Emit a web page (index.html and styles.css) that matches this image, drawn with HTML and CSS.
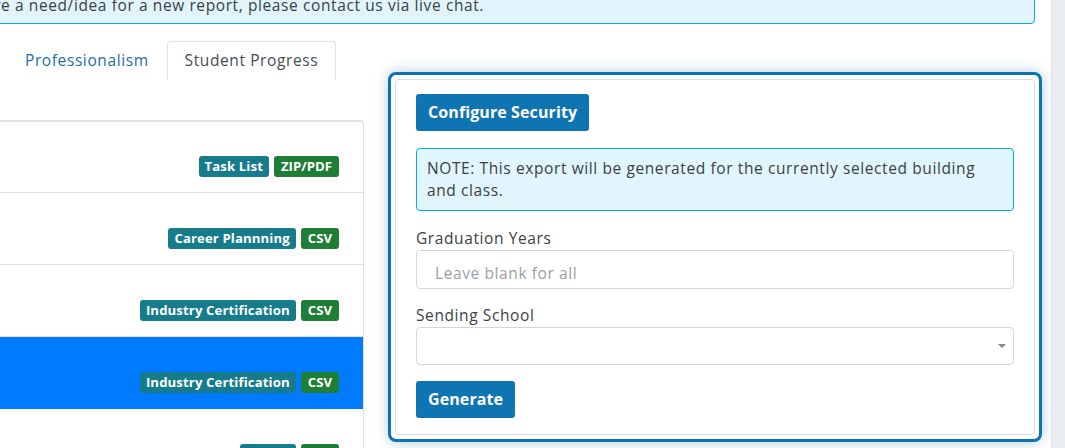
FILE: index.html
```html
<!DOCTYPE html>
<html>
<head>
    <title>Reports</title>
    <link rel="stylesheet" href="styles.css">
</head>
<body>
    <div class="page">
        <!-- info banner at the top of the reports page -->
        <div class="banner">If you have a need/idea for a new report, please contact us via live chat.</div>

        <div class="main">
            <!-- report categories and the report list -->
            <div class="reports">
                <ul class="tabs">
                    <li><a href="#">Professionalism</a></li>
                    <li class="active"><a href="#">Student Progress</a></li>
                </ul>
                <div class="list">
                    <div class="row"><span class="badge teal">Task List</span><span class="badge green">ZIP/PDF</span></div>
                    <div class="row"><span class="badge teal">Career Plannning</span><span class="badge green">CSV</span></div>
                    <div class="row"><span class="badge teal">Industry Certification</span><span class="badge green">CSV</span></div>
                    <div class="row selected"><span class="badge teal">Industry Certification</span><span class="badge green">CSV</span></div>
                    <div class="row"><span class="badge teal">Roster</span><span class="badge green">CSV</span></div>
                </div>
            </div>

            <!-- export options for the selected report -->
            <div class="export">
                <div class="card">
                    <a class="button" href="#">Configure Security</a>
                    <div class="note">NOTE: This export will be generated for the currently selected building and class.</div>
                    <label for="years">Graduation Years</label>
                    <input id="years" type="text" placeholder="Leave blank for all">
                    <label for="school">Sending School</label>
                    <div class="select" id="school"><span class="caret"></span></div>
                    <a class="button" href="#">Generate</a>
                </div>
            </div>
        </div>
    </div>
    <div class="gutter"></div>
</body>
</html>
```

FILE: styles.css
```css
/* Page frame */
body {
    margin: 0;
    height: 448px;
    overflow: hidden;
    display: flex;
    font-family: "Open Sans", "DejaVu Sans", sans-serif;
    font-size: 15.5px;
    letter-spacing: 0.6px;
    color: #3b3f44;
    background: white;
}

.page {
    flex: 1;
    min-width: 0;
    overflow: hidden;
}

.gutter {
    width: 13px;
    background: #e9edf2;
    border-left: 1px solid #dde2e8;
}

/* Info banner */
.banner {
    background: #e1f4fc;
    border: 1px solid #03a9f4;
    border-radius: 4px;
    margin: -25px 16px 0 -96px;
    padding: 18px 20px 7px;
    line-height: 22px;
    white-space: nowrap;
}

.main {
    display: flex;
    align-items: flex-start;
    margin-top: 17px;
}

/* Tabs */
.reports {
    width: 364px;
    flex: none;
}

.tabs {
    list-style: none;
    margin: 0 0 40px;
    padding: 0 0 0 7px;
    display: flex;
}

.tabs a {
    display: block;
    padding: 8px 17px 9px;
    line-height: 21px;
    color: #1b6ea8;
    text-decoration: none;
    border: 1px solid transparent;
    border-bottom: none;
    border-radius: 4px 4px 0 0;
}

.tabs .active a {
    color: #474c52;
    border-color: #dee2e6;
}

/* Report list */
.list {
    border-top: 2px solid #dee2e6;
    border-right: 1px solid #dee2e6;
    border-top-right-radius: 4px;
}

.row {
    height: 72px;
    border-bottom: 1px solid #dee2e6;
    display: flex;
    justify-content: flex-end;
    align-items: flex-end;
    gap: 5px;
    padding: 0 24px 15px 0;
    box-sizing: border-box;
}

.row:first-child {
    height: 71px;
}

.row.selected {
    background: #007bff;
    border-bottom-color: #007bff;
}

.badge {
    font-size: 13.2px;
    font-weight: 700;
    color: white;
    line-height: 21px;
    padding: 0 6px;
    border-radius: 3px;
    letter-spacing: 0.1px;
}

.teal {
    background: #167b8b;
}

.green {
    background: #1f7e36;
    padding: 0 7px;
    letter-spacing: 0;
}

/* Export popup */
.export {
    flex: none;
    width: 640px;
    margin: 31px 0 0 24px;
    border: 3px solid #0f72ae;
    border-radius: 8px;
    padding: 4px;
    background: white;
    box-shadow: 0 0 14px rgba(15, 114, 174, 0.35);
}

.card {
    border: 1px solid #dcdcdc;
    border-radius: 4px;
    padding: 14px 20px 16px;
    display: flex;
    flex-direction: column;
    align-items: flex-start;
}

.button {
    display: block;
    background: #0f75b2;
    color: white;
    font-weight: 700;
    font-size: 16px;
    line-height: 37px;
    padding: 0 12px;
    border-radius: 3px;
    text-decoration: none;
    letter-spacing: 0.1px;
}

.note {
    align-self: stretch;
    margin: 17px 0 16px;
    background: #e1f5fd;
    border: 1px solid #03a9f4;
    border-radius: 4px;
    padding: 8px 10px 9px;
    line-height: 22px;
}

label {
    line-height: 22px;
    margin-bottom: 1px;
}

input, .select {
    align-self: stretch;
    box-sizing: border-box;
    height: 39px;
    border: 1px solid #d3d6da;
    border-radius: 4px;
    font: inherit;
    letter-spacing: inherit;
    margin-bottom: 15px;
}

input {
    padding: 6px 18px 0;
    color: #3b3f44;
}

input::placeholder {
    color: #9a9fa5;
}

.select {
    height: 38px;
    margin-bottom: 16px;
    position: relative;
}

/* dropdown arrow */
.caret {
    position: absolute;
    right: 7px;
    top: 16px;
    border-left: 4px solid transparent;
    border-right: 4px solid transparent;
    border-top: 4px solid #888;
}
```
